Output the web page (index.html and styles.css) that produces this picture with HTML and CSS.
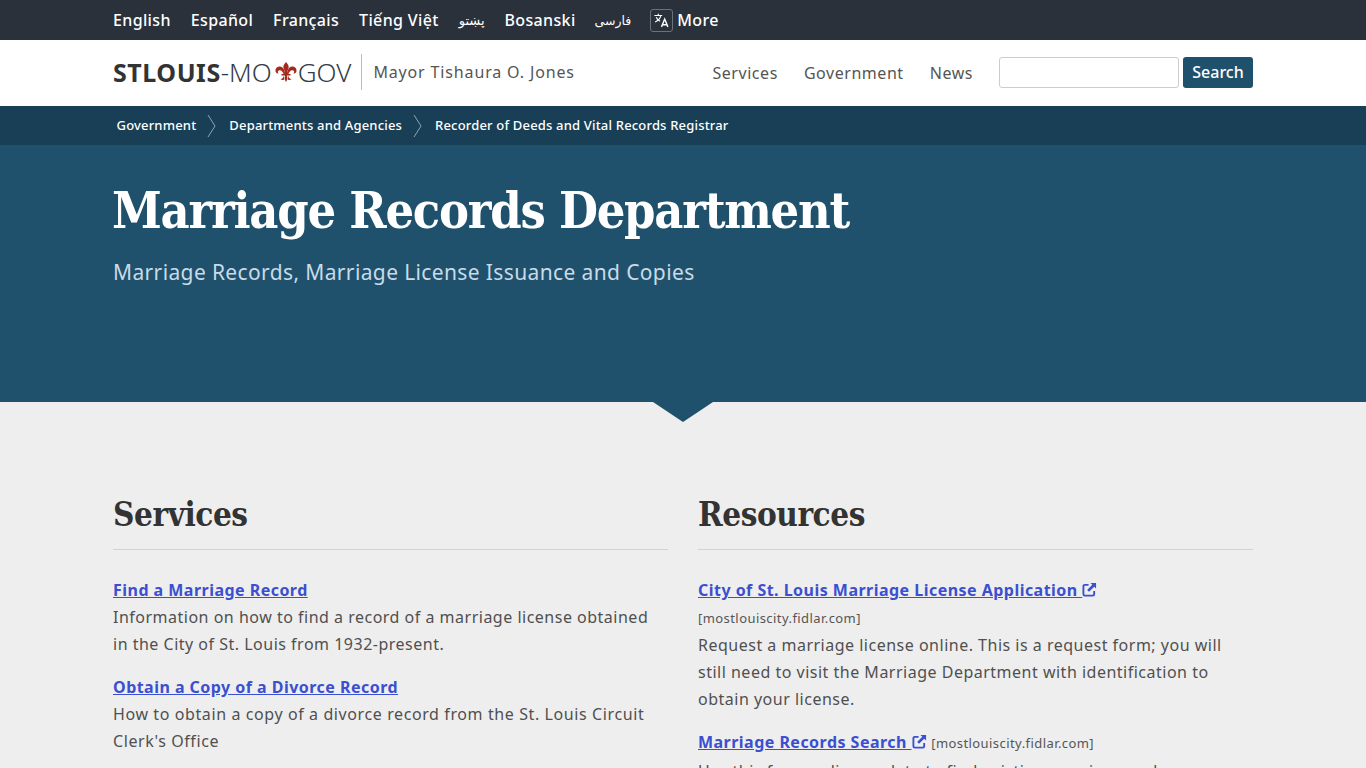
FILE: index.html
```html
<!DOCTYPE html>
<html lang="en">
<head>
<meta charset="utf-8">
<title>Marriage Records Department</title>
<link rel="stylesheet" href="styles.css">
</head>
<body>
<div class="topbar"><div class="container langs">
<a>English</a><a>Español</a><a>Français</a><a>Tiếng Việt</a><a class="ar">پښتو</a><a>Bosanski</a><a class="ar fa">فارسی</a>
<a class="more"><span class="tr-box"><svg viewBox="0 0 24 24" width="17" height="17" fill="none" stroke="#fff" stroke-width="1.6"><path d="M2 5h11M7.500 2.500V5M11 5c-.8 3.500-3.500 7-8 9M4.500 7.500c1 2.500 3 4.500 5.500 5.500"/><path stroke-width="2" d="M12 21l4.500-11 4.500 11M13.500 18h6"/></svg></span>More</a>
</div></div>
<header class="site-header"><div class="container head-row">
<div class="brand"><b>STLOUIS</b>-MO<svg class="fleur" viewBox="0 0 22 20" width="22" height="20" fill="#a5291d"><path d="M11 0C13.500 2.500 14.500 5 13 7.500 12.300 8.800 12 10 12 12H10C10 10 9.700 8.800 9 7.500 7.500 5 8.500 2.500 11 0Z"/><path d="M8 6C5 3.500 1 4.500.5 8 .2 10.500 2 12 3.500 11.500 2.500 10.500 2.500 8.500 4.500 8.300 6.500 8.100 8 10 8.500 12H10C10 10 9.300 8 8 6Z"/><path d="M14 6C17 3.500 21 4.500 21.500 8 21.800 10.500 20 12 18.500 11.500 19.500 10.500 19.500 8.500 17.500 8.300 15.500 8.100 14 10 13.500 12H12C12 10 12.700 8 14 6Z"/><path d="M6.500 12h9v1.600h-9zM10 13.600h2l.5 3.400L11 20l-1.500-3zM9 13.600C8.500 15.500 7.500 17 5.500 17 6.500 18 8 18.500 9 17.500zM13 13.600C13.500 15.500 14.500 17 16.500 17 15.500 18 14 18.500 13 17.500z"/></svg><span class="gov">GOV</span></div>
<div class="mayor">Mayor Tishaura O. Jones</div>
<nav class="main-nav"><a>Services</a><a>Government</a><a>News</a></nav>
<form class="search"><input class="search-input" type="text" aria-label="Search"><button class="search-btn" type="button">Search</button></form>
</div></header>
<div class="crumbs"><div class="container crumb-row">
<a>Government</a><svg class="chev" viewBox="0 0 10 24" width="10" height="24"><path d="M1 1l7 11-7 11" fill="none" stroke="#8fa5b2"/></svg>
<a>Departments and Agencies</a><svg class="chev" viewBox="0 0 10 24" width="10" height="24"><path d="M1 1l7 11-7 11" fill="none" stroke="#8fa5b2"/></svg>
<a>Recorder of Deeds and Vital Records Registrar</a>
</div></div>
<section class="hero"><div class="container">
<h1>Marriage Records Department</h1>
<p class="sub">Marriage Records, Marriage License Issuance and Copies</p>
</div><div class="notch"></div></section>
<main class="container cols">
<section class="col">
<h2>Services</h2>
<div class="item"><a class="lnk">Find a Marriage Record</a><p class="narrow">Information on how to find a record of a marriage license obtained in the City of St. Louis from 1932-present.</p></div>
<div class="item"><a class="lnk">Obtain a Copy of a Divorce Record</a><p class="narrow wide">How to obtain a copy of a divorce record from the St. Louis Circuit Clerk's Office</p></div>
</section>
<section class="col">
<h2>Resources</h2>
<div class="item"><a class="lnk">City of St. Louis Marriage License Application <svg class="ext" viewBox="0 0 16 16" width="15" height="15"><path d="M7 3H3a1.500 1.500 0 0 0-1.500 1.500v8.500A1.500 1.500 0 0 0 3 14.500h8.500A1.500 1.500 0 0 0 13 13V9.500" fill="none" stroke="currentColor" stroke-width="2"/><path d="M9 1h6v6l-2-2-5.500 5.500-2-2L11 3z" fill="currentColor"/></svg></a> <span class="domain block">[mostlouiscity.fidlar.com]</span><p>Request a marriage license online. This is a request form; you will still need to visit the Marriage Department with identification to obtain your license.</p></div>
<div class="item"><a class="lnk">Marriage Records Search <svg class="ext" viewBox="0 0 16 16" width="15" height="15"><path d="M7 3H3a1.500 1.500 0 0 0-1.500 1.500v8.500A1.500 1.500 0 0 0 3 14.500h8.500A1.500 1.500 0 0 0 13 13V9.500" fill="none" stroke="currentColor" stroke-width="2"/><path d="M9 1h6v6l-2-2-5.500 5.500-2-2L11 3z" fill="currentColor"/></svg></a> <span class="domain">[mostlouiscity.fidlar.com]</span><p class="last">Use this form online update to find existing marriage and license&nbsp;information.</p></div>
</section>
</main>
</body>
</html>
```
FILE: styles.css
```css
* { box-sizing: border-box; }
html, body { margin: 0; padding: 0; }
body { font-family: "Noto Sans", "Open Sans", "DejaVu Sans", sans-serif; background: #eee; color: #444; font-size: 16px; height: 768px; overflow: hidden; }
.container { width: 1140px; margin: 0 auto; }
.topbar { background: #2a313b; height: 40px; }
.langs { display: flex; align-items: center; height: 40px; gap: 20px; color: #fff; font-size: 16px; font-weight: 500; letter-spacing: .35px; }
.langs .ar { font-size: 13px; font-weight: 400; letter-spacing: 0; font-family: "DejaVu Sans", sans-serif; }
.langs .fa { font-size: 12.500px; margin-left: -1px; }
.more { display: flex; align-items: center; gap: 4px; margin-left: -1px; }
.tr-box { display: inline-flex; align-items: center; justify-content: center; width: 23px; height: 23px; border: 1px solid #6b727b; border-radius: 3px; }
.site-header { background: #fff; height: 66px; }
.head-row { display: flex; align-items: center; height: 66px; }
.brand { display: flex; align-items: center; font-size: 26px; font-weight: 300; color: #333d47; padding-right: 10px; height: 36px; border-right: 1px solid #bbb; margin-top: -2px; }
.brand b { color: #333; font-size: 25px; font-weight: 700; letter-spacing: .55px; }
.fleur { margin: 0 1px 0 3px; }
.mayor { margin-left: 11px; font-size: 16px; color: #555; letter-spacing: .85px; margin-top: -2px; }
.main-nav { margin-left: auto; display: flex; gap: 26px; font-size: 16px; color: #555; letter-spacing: .55px; }
.search { display: flex; margin-left: 26px; gap: 4px; margin-bottom: 2px; }
.search-input { width: 180px; height: 31px; border: 1px solid #ccc; border-radius: 3px; background: #fff; }
.search-btn { width: 70px; height: 31px; border: 0; border-radius: 3px; background: #1f516d; color: #fff; font: 500 16px "Noto Sans", sans-serif; padding: 0; }
.crumbs { background: #183f56; height: 39px; }
.crumb-row { display: flex; align-items: center; height: 39px; padding: 0 0 2px 3.500px; font-size: 13px; font-weight: 500; color: #fff; gap: 10.500px; letter-spacing: .18px; }
.chev { flex: none; margin: 2px 2px 0 0; }
.hero { background: #1f516d; height: 257px; position: relative; padding-top: 32px; }
h1 { margin: 0 0 0 -1px; font-family: "DejaVu Serif Condensed", "DejaVu Serif", serif; font-size: 50px; line-height: 68px; font-weight: 700; color: #fff; letter-spacing: -1.230px; }
.sub { margin: 12px 0 0; font-size: 21px; line-height: 30px; color: #c9dbe6; letter-spacing: .37px; }
.notch { position: absolute; left: 653px; top: 257px; width: 0; height: 0; border-left: 30px solid transparent; border-right: 30px solid transparent; border-top: 20px solid #1f516d; }
.cols { display: grid; grid-template-columns: 555px 555px; gap: 30px; padding-top: 87px; }
h2 { margin: 0 0 27px; font-family: "DejaVu Serif Condensed", "DejaVu Serif", serif; font-size: 33px; line-height: 52px; height: 61px; font-weight: 700; color: #333; letter-spacing: -.45px; border-bottom: 1px solid #d3d3d3; }
.item { margin-bottom: 16px; line-height: 27px; letter-spacing: .5px; color: #505050; }
.item p { margin: 0; }
.item .narrow { padding-right: 10px; }
.item .wide { letter-spacing: .6px; }
.last { padding-top: 1px; }
.lnk { color: #3b4fd1; font-weight: 700; text-decoration: underline; letter-spacing: .47px; }
.ext { vertical-align: -1px; }
.domain { font-size: 13px; letter-spacing: .43px; color: #555; }
.domain.block { display: block; line-height: 28px; }
```
